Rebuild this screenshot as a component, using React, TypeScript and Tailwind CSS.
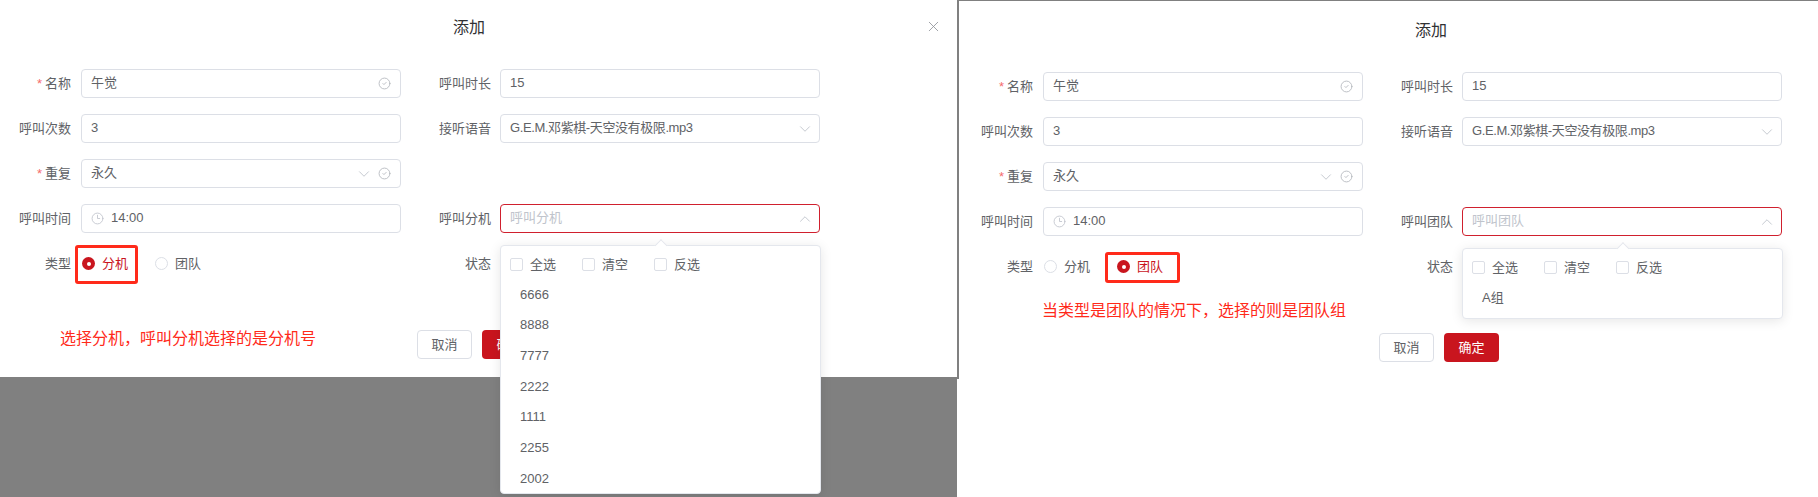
import React from "react";
import { ChevronDown, ChevronUp, CircleCheck, Clock3, X } from "lucide-react";

const FONT = "font-['Liberation_Sans','Noto_Sans_CJK_SC',sans-serif]";

const Field = ({ label, required, side, children }: { label: string; required?: boolean; side?: boolean; children?: React.ReactNode }) => (
  <div className="flex items-center">
    <label className="w-[71px] shrink-0 text-right text-[13px] text-[#606266]">
      {required && <span className="mr-[3px] text-[#f56c6c]">*</span>}
      {label}
    </label>
    <div className={`relative w-[320px] ${side ? "ml-[9px]" : "ml-[10px]"}`}>{children}</div>
  </div>
);

const Input = ({ value, select, check, clock, tight }: { value: string; select?: boolean; check?: boolean; clock?: boolean; tight?: boolean }) => (
  <div className="flex h-[29px] items-center rounded border border-[#dcdfe6] bg-white pb-[2px] pl-[9px] pr-[9px] text-[13px] text-[#606266]">
    {clock && <Clock3 size={13} strokeWidth={1.6} className="mr-[7px] mt-[2px] text-[#c0c4cc]" />}
    <span className={`flex-1 ${tight ? "tracking-[-0.4px]" : ""}`}>{value}</span>
    {select && <ChevronDown size={18} strokeWidth={1.2} className="mr-[-4px] mt-[2px] text-[#c0c4cc]" />}
    {check && <CircleCheck size={13} strokeWidth={1.6} className="ml-[9px] mt-[2px] text-[#b4b7bd]" />}
  </div>
);

const Radio = ({ label, checked }: { label: string; checked?: boolean }) => (
  <div className="flex items-center">
    {checked ? (
      <span className="flex h-[13px] w-[13px] items-center justify-center rounded-full bg-[#c9151e]">
        <span className="h-[4px] w-[4px] rounded-full bg-white" />
      </span>
    ) : (
      <span className="h-[13px] w-[13px] rounded-full border border-[#dcdfe6] bg-white" />
    )}
    <span className={`ml-[7px] text-[13px] ${checked ? "text-[#c9151e]" : "text-[#606266]"}`}>{label}</span>
  </div>
);

const Dropdown = ({ items, tall }: { items: string[]; tall?: boolean }) => (
  <div className="absolute left-0 top-[41px] z-10 w-[321px]">
    <div className="absolute left-1/2 top-[-4px] h-[9px] w-[9px] -translate-x-1/2 rotate-45 border-l border-t border-[#e4e7ed] bg-white" />
    <div className={`${tall ? "h-[249px]" : "h-[71px]"} overflow-hidden rounded border border-[#e4e7ed] bg-white shadow-[0_2px_12px_rgba(0,0,0,0.1)]`}>
      <div className="flex h-[33px] items-start pl-[9px] pt-[9px]">
        {["全选", "清空", "反选"].map((t) => (
          <div key={t} className="flex w-[72px] items-center text-[13px] text-[#606266]">
            <span className="h-[13px] w-[13px] rounded-[2px] border border-[#dcdfe6] bg-white" />
            <span className="ml-[7px]">{t}</span>
          </div>
        ))}
      </div>
      {items.map((t) => (
        <div key={t} className="flex h-[30.67px] items-center pl-[19px] text-[13px] text-[#606266]">
          {t}
        </div>
      ))}
    </div>
  </div>
);

const Form = ({ team }: { team?: boolean }) => {
  const callLabel = team ? "呼叫团队" : "呼叫分机";
  return (
    <>
      <div className="flex h-[69px] items-start pl-[453px] pt-[16px] text-[16px] leading-[24px] text-[#303133]">添加</div>
      <div className="grid w-[820px] grid-cols-[401px_400px] gap-x-[19px] gap-y-[16px]">
        <Field label="名称" required>
          <Input value="午觉" check />
        </Field>
        <Field side label="呼叫时长">
          <Input value="15" />
        </Field>
        <Field label="呼叫次数">
          <Input value="3" />
        </Field>
        <Field side label="接听语音">
          <Input value="G.E.M.邓紫棋-天空没有极限.mp3" select tight />
        </Field>
        <Field label="重复" required>
          <Input value="永久" select check />
        </Field>
        <div />
        <Field label="呼叫时间">
          <Input value="14:00" clock />
        </Field>
        <Field side label={callLabel}>
          <div className="flex h-[29px] items-center justify-between rounded border border-[#d0202e] bg-white pb-[2px] pl-[9px] pr-[9px] text-[13px] text-[#c0c4cc]">
            <span>{callLabel}</span>
            <ChevronUp size={18} strokeWidth={1.2} className="mr-[-4px] mt-[2px] text-[#c0c4cc]" />
          </div>
          <Dropdown tall={!team} items={team ? ["A组"] : ["6666", "8888", "7777", "2222", "1111", "2255", "2002"]} />
        </Field>
        <Field label="类型">
          <div className="flex h-[29px] items-center gap-[27px] pl-[1px]">
            <Radio label="分机" checked={!team} />
            <Radio label="团队" checked={team} />
          </div>
        </Field>
        <Field side label="状态" />
      </div>
      <div className="mt-[52px] flex gap-[10px] pl-[417px]">
        <button className="h-[29px] w-[55px] rounded border border-[#dcdfe6] bg-white text-[13px] text-[#606266]">取消</button>
        <button className="h-[29px] w-[55px] rounded bg-[#c9151e] text-[13px] text-white">确定</button>
      </div>
    </>
  );
};

export default function App() {
  return (
    <div className={`flex h-[497px] w-[1818px] overflow-hidden bg-white ${FONT}`}>
      <div className="flex w-[957px] flex-col bg-[#808080]">
        <div className="relative h-[377px] bg-white">
          <Form />
          <X size={17} strokeWidth={1.2} className="absolute left-[925px] top-[18px] text-[#909399]" />
          {/* annotations drawn on the screenshot */}
          <div className="absolute left-[75px] top-[245px] h-[39px] w-[63px] rounded-[3px] border-[3px] border-[#ff2a1a]" />
          <div className="absolute left-[60px] top-[327px] text-[16px] leading-[24px] text-[#ff2a1a]">选择分机，呼叫分机选择的是分机号</div>
        </div>
      </div>
      <div className="h-[379px] w-[2px] bg-[#808080]" />
      <div className="relative flex-1 border-t border-[#808080] pl-[3px] pt-[2px]">
        <Form team />
        <div className="absolute left-[146px] top-[251px] h-[31px] w-[75px] rounded-[3px] border-[3px] border-[#ff2a1a]" />
        <div className="absolute left-[83px] top-[298px] text-[16px] leading-[24px] text-[#ff2a1a]">当类型是团队的情况下，选择的则是团队组</div>
      </div>
    </div>
  );
}
